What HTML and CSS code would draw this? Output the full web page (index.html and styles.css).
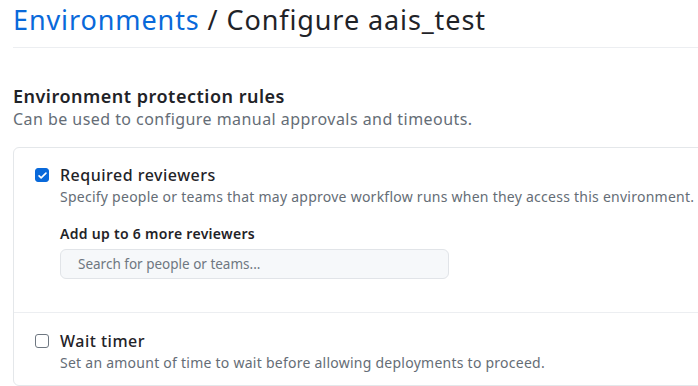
FILE: index.html
```html
<!DOCTYPE html>
<html lang="en">
<head>
    <meta charset="UTF-8">
    <meta name="viewport" content="width=device-width, initial-scale=1.0">
    <title>Configure aais_test</title>
    <link rel="stylesheet" href="styles.css">
</head>
<body>
    <div class="page">
        <div class="subhead">
            <h1 class="subhead-title"><a href="#" class="crumb">Environments</a> / Configure aais_test</h1>
        </div>

        <div class="section">
            <h2 class="section-title">Environment protection rules</h2>
            <p class="section-note">Can be used to configure manual approvals and timeouts.</p>
        </div>

        <div class="rules-box">
            <div class="rule">
                <div class="rule-head">
                    <span class="check is-checked">
                        <svg viewBox="0 0 16 16" width="11" height="11"><path d="M3 8.5l3 3 7-7" fill="none" stroke="#fff" stroke-width="2.4" stroke-linecap="round" stroke-linejoin="round"/></svg>
                    </span>
                    <div class="rule-body">
                        <div class="rule-title">Required reviewers</div>
                        <div class="rule-note">Specify people or teams that may approve workflow runs when they access this environment.</div>
                        <div class="field-label">Add up to 6 more reviewers</div>
                        <input class="search-input" type="text" placeholder="Search for people or teams...">
                    </div>
                </div>
            </div>

            <div class="rule rule-last">
                <div class="rule-head">
                    <span class="check"></span>
                    <div class="rule-body">
                        <div class="rule-title">Wait timer</div>
                        <div class="rule-note">Set an amount of time to wait before allowing deployments to proceed.</div>
                    </div>
                </div>
            </div>
        </div>
    </div>
</body>
</html>
```

FILE: styles.css
```css
body, html {
    margin: 0;
    padding: 0;
    background-color: #ffffff;
    overflow: hidden;
    font-family: 'Noto Sans', 'Open Sans', sans-serif;
    color: #1f2328;
}
.page {
    width: 760px;
    padding-left: 13px;
}
.subhead {
    border-bottom: 1px solid #eceef1;
    padding-bottom: 7px;
}
.subhead-title {
    margin: 0;
    font-size: 27px;
    font-weight: 400;
    line-height: 40px;
    letter-spacing: 0.9px;
    color: #1f2328;
}
.crumb {
    color: #0969da;
    text-decoration: none;
}
.section {
    margin-top: 36px;
}
.section-title {
    margin: 0;
    font-size: 18px;
    font-weight: 600;
    line-height: 24px;
    letter-spacing: 0.5px;
}
.section-note {
    margin: 0;
    font-size: 16px;
    line-height: 22px;
    letter-spacing: 0.45px;
    color: #656d76;
}
.rules-box {
    margin-top: 17px;
    border: 1px solid #e4e7ea;
    border-radius: 6px;
}
.rule {
    padding: 16px 22px 33px 21px;
    border-bottom: 1px solid #eceef1;
}
.rule-last {
    border-bottom: none;
    padding-top: 17px;
    padding-bottom: 11px;
}
.rule-head {
    display: flex;
    align-items: flex-start;
    gap: 11px;
}
.check {
    flex: none;
    box-sizing: border-box;
    width: 14px;
    height: 14px;
    margin-top: 4px;
    border: 1.5px solid #6e7781;
    border-radius: 3px;
    background-color: #ffffff;
    display: flex;
    justify-content: center;
    align-items: center;
}
.check.is-checked {
    border-color: #0969da;
    background-color: #0969da;
}
.rule-title {
    font-size: 16px;
    font-weight: 500;
    line-height: 22px;
    letter-spacing: 0.5px;
}
.rule-note {
    font-size: 14px;
    line-height: 22px;
    letter-spacing: 0.25px;
    color: #656d76;
    white-space: nowrap;
}
.field-label {
    margin-top: 16px;
    font-size: 14px;
    font-weight: 600;
    line-height: 20px;
    letter-spacing: 0.3px;
}
.search-input {
    display: block;
    box-sizing: border-box;
    margin-top: 5px;
    width: 389px;
    height: 30px;
    padding: 0 17px;
    border: 1px solid #e1e4e8;
    border-radius: 6px;
    background-color: #f6f8fa;
    font-family: inherit;
    font-size: 13.5px;
    color: #1f2328;
}
.search-input::placeholder {
    color: #6e7781;
}
```
